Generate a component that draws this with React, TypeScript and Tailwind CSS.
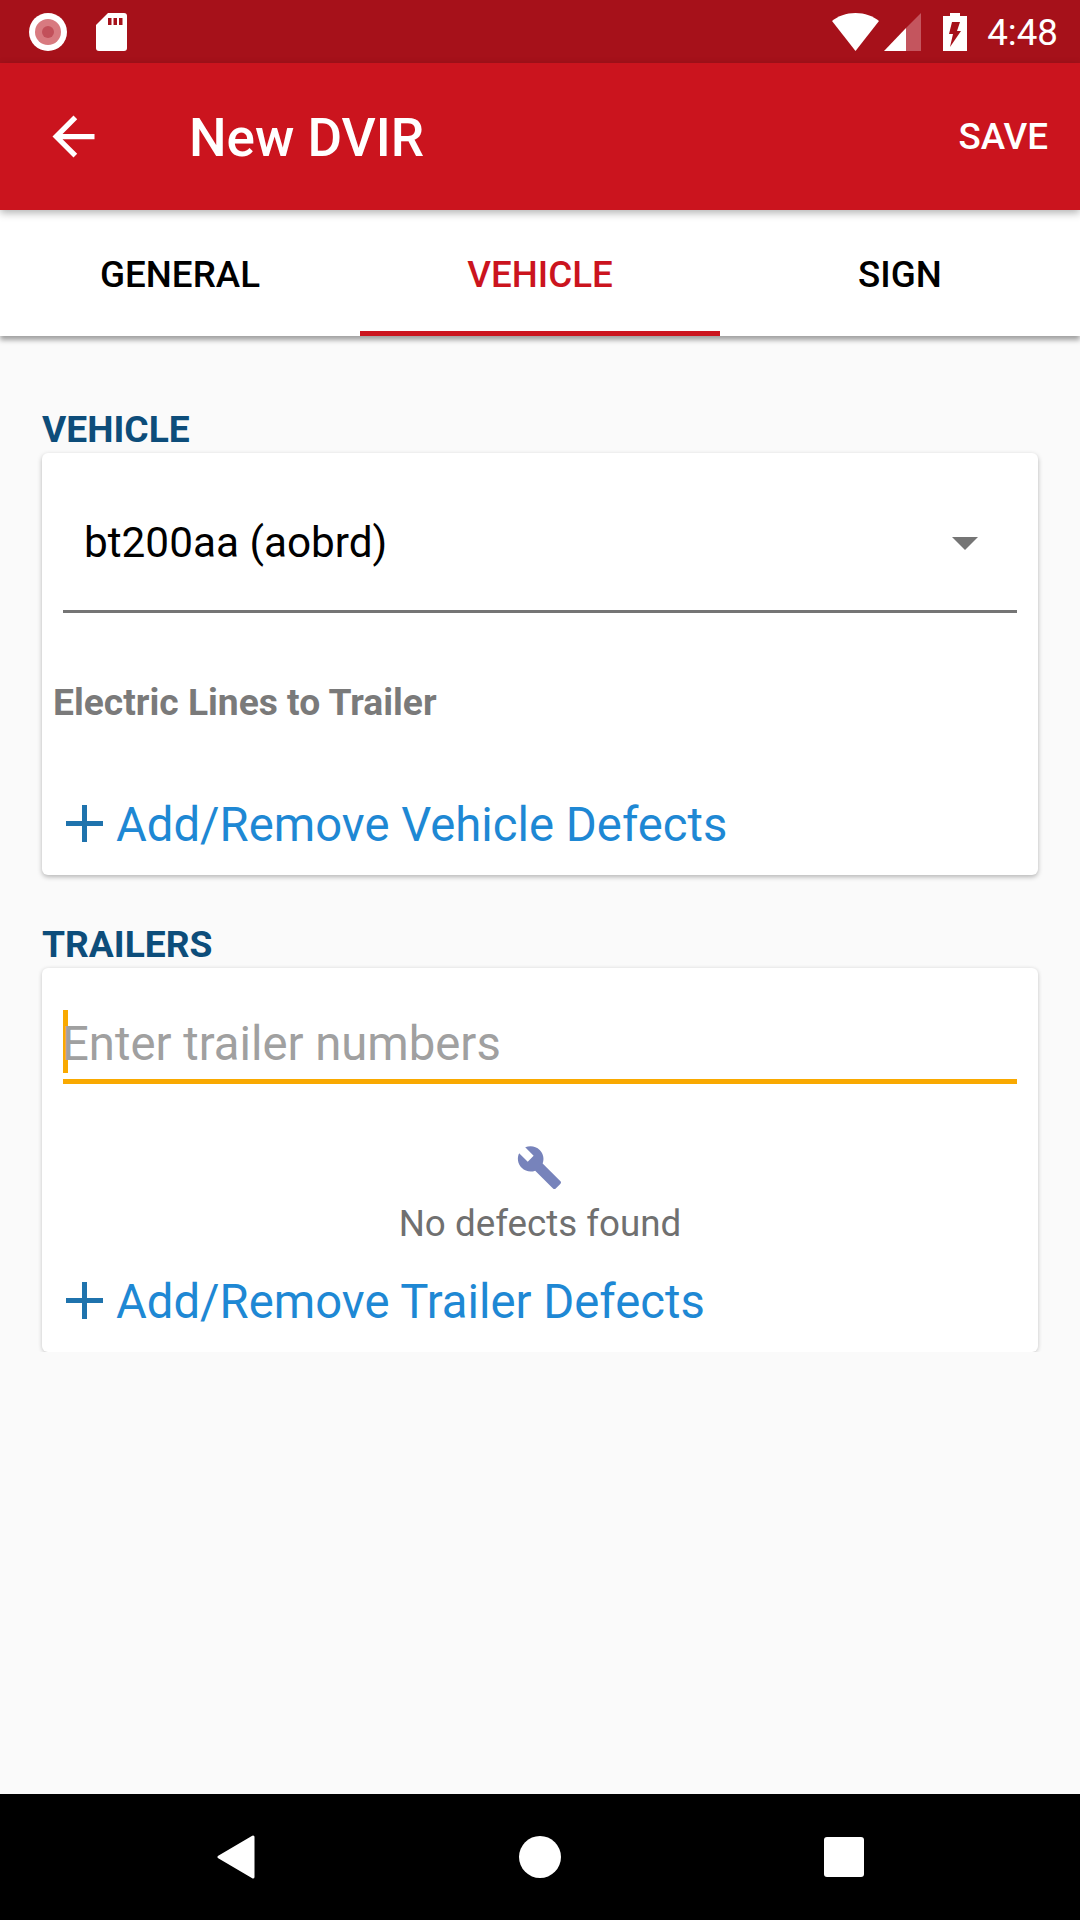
function StatusBar() {
  return (
    <div className="flex h-[63px] shrink-0 items-center justify-between bg-[#a6111a] pl-[29px] pr-[22px]">
      <div className="flex items-center gap-[29px]">
        <div className="flex h-[38px] w-[38px] items-center justify-center rounded-full bg-white">
          <div className="flex h-[26px] w-[26px] items-center justify-center rounded-full bg-[#d87a80]">
            <div className="h-[12px] w-[12px] rounded-full bg-[#c2505a]" />
          </div>
        </div>
        <svg width="31" height="38" viewBox="0 0 31 38">
          <path fill="#fff" d="M12 0h16a3 3 0 0 1 3 3v32a3 3 0 0 1-3 3H3a3 3 0 0 1-3-3V12z" />
          <path fill="#a6111a" d="M12 5h3.500v7H12zM17.500 5H21v7h-3.500zM23 5h3.500v7H23z" />
        </svg>
      </div>
      <div className="flex items-center">
        <svg width="47" height="38" viewBox="0 0 47 38" className="mr-[5px]">
          <path fill="#fff" d="M0 8C6 3 14 0 23.500 0S41 3 47 8L23.500 38z" />
        </svg>
        <svg width="37" height="38" viewBox="0 0 37 38" className="mr-[22px]">
          <path fill="#c4555e" d="M37 0v38H22V15z" />
          <path fill="#fff" d="M22 15v23H0z" />
        </svg>
        <svg width="24" height="38" viewBox="0 0 24 38" className="mr-[20px]">
          <path fill="#fff" d="M7 0h10v3h7v35H0V3h7z" />
          <path fill="#a6111a" d="M9 9h8l-3 9h4L7 34l3-13H6z" />
        </svg>
        <span className="pt-[3px] text-[36.75px] leading-none text-white">4:48</span>
      </div>
    </div>
  );
}

function AppBar() {
  return (
    <div className="relative z-20 flex h-[147px] shrink-0 items-center justify-between bg-[#cb141e] pl-[42px] pr-[32px] shadow-[0_3px_8px_rgba(0,0,0,0.3)]">
      <div className="flex items-center">
        <svg width="63" height="63" viewBox="0 0 24 24">
          <path fill="#fff" d="M20 11H7.830l5.590-5.590L12 4l-8 8 8 8 1.410-1.410L7.830 13H20v-2z" />
        </svg>
        <span className="ml-[84px] pt-[3px] text-[53px] leading-none font-medium text-white">New DVIR</span>
      </div>
      <span className="pt-[2px] text-[36.75px] leading-none font-medium text-white">SAVE</span>
    </div>
  );
}

function Tabs() {
  return (
    <div className="relative z-10 grid h-[126px] shrink-0 grid-cols-3 bg-white shadow-[0_4px_5px_rgba(0,0,0,0.36)]">
      <div className="flex items-center justify-center pt-[3px] text-[36.75px] font-medium text-black">GENERAL</div>
      <div className="flex items-center justify-center border-b-[5px] border-[#cb141e] pt-[8px] text-[36.75px] font-medium text-[#cb141e]">
        VEHICLE
      </div>
      <div className="flex items-center justify-center pt-[3px] text-[36.75px] font-medium text-black">SIGN</div>
    </div>
  );
}

function AddLink({ label }: { label: string }) {
  return (
    <div className="flex items-center pl-[24px]">
      <svg width="37" height="37" viewBox="0 0 37 37" className="mb-[5px]">
        <path fill="#1f73ad" d="M16 0h5v16h16v5H21v16h-5V21H0v-5h16z" />
      </svg>
      <span className="ml-[13px] text-[47.25px] leading-none text-[#1e88d4]">{label}</span>
    </div>
  );
}

export default function App() {
  return (
    <div className="flex h-[1920px] w-[1080px] flex-col overflow-hidden bg-[#fafafa] font-['Roboto',sans-serif]">
      <StatusBar />
      <AppBar />
      <Tabs />
      <main className="flex-1 px-[42px]">
        <h2 className="mt-[68px] pt-[2px] text-[37.2px] leading-[47px] font-bold text-[#0d4d7a]">VEHICLE</h2>
        <section className="h-[422px] rounded-[6px] bg-white shadow-[0_2px_5px_rgba(0,0,0,0.28)]">
          <div className="mx-[21px] flex h-[160px] items-center justify-between border-b-[3px] border-[#757575] pt-[24px] pl-[21px] pr-[39px]">
            <span className="text-[42.3px] leading-none text-black">bt200aa (aobrd)</span>
            <div className="h-0 w-0 border-x-[13px] border-t-[13px] border-x-transparent border-t-[#757575]" />
          </div>
          <p className="mt-[69px] ml-[11px] text-[37.2px] leading-[41px] font-bold text-[#7a7a7a]">
            Electric Lines to Trailer
          </p>
          <div className="mt-[79px]">
            <AddLink label="Add/Remove Vehicle Defects" />
          </div>
        </section>

        <h2 className="mt-[44px] pt-[2px] text-[37.2px] leading-[47px] font-bold text-[#0d4d7a]">TRAILERS</h2>
        <section className="h-[384px] rounded-[6px] bg-white shadow-[0_1px_4px_rgba(0,0,0,0.22)] [clip-path:inset(-6px_-6px_0_-6px)]">
          <div className="mx-[21px] flex h-[74px] translate-y-[42px] items-start border-b-[5px] border-[#f9a900]">
            <div className="h-[63px] w-[5px] shrink-0 bg-[#f9a900]" />
            <span className="-ml-[6px] pt-[9px] text-[47.25px] leading-[50px] text-[#a0a0a0]">Enter trailer numbers</span>
          </div>
          <div className="mt-[102px] flex flex-col items-center">
            <svg width="47" height="47" viewBox="0 0 24 24" className="-translate-x-[1px]">
              <path
                fill="#7783bb"
                d="M22.700 19l-9.100-9.100c.9-2.300.4-5-1.500-6.900-2-2-5-2.400-7.400-1.300L9 6 6 9 1.600 4.700C.4 7.100.9 10.100 2.900 12.100c1.900 1.900 4.600 2.400 6.900 1.500l9.100 9.100c.4.4 1 .4 1.400 0l2.300-2.300c.5-.4.5-1.100.1-1.400z"
              />
            </svg>
            <p className="mt-[12px] text-[36.75px] leading-[42px] text-[#707070]">No defects found</p>
          </div>
          <div className="mt-[34px]">
            <AddLink label="Add/Remove Trailer Defects" />
          </div>
        </section>
      </main>
      <div className="flex h-[126px] shrink-0 items-center bg-black pl-[217px]">
        <svg width="38" height="44" viewBox="0 0 38 44">
          <path fill="#fff" stroke="#fff" strokeWidth="3" strokeLinejoin="round" d="M2 22 36 2v40z" />
        </svg>
        <div className="ml-[264px] h-[42px] w-[42px] rounded-full bg-white" />
        <div className="ml-[263px] h-[40px] w-[40px] rounded-[3px] bg-white" />
      </div>
    </div>
  );
}
